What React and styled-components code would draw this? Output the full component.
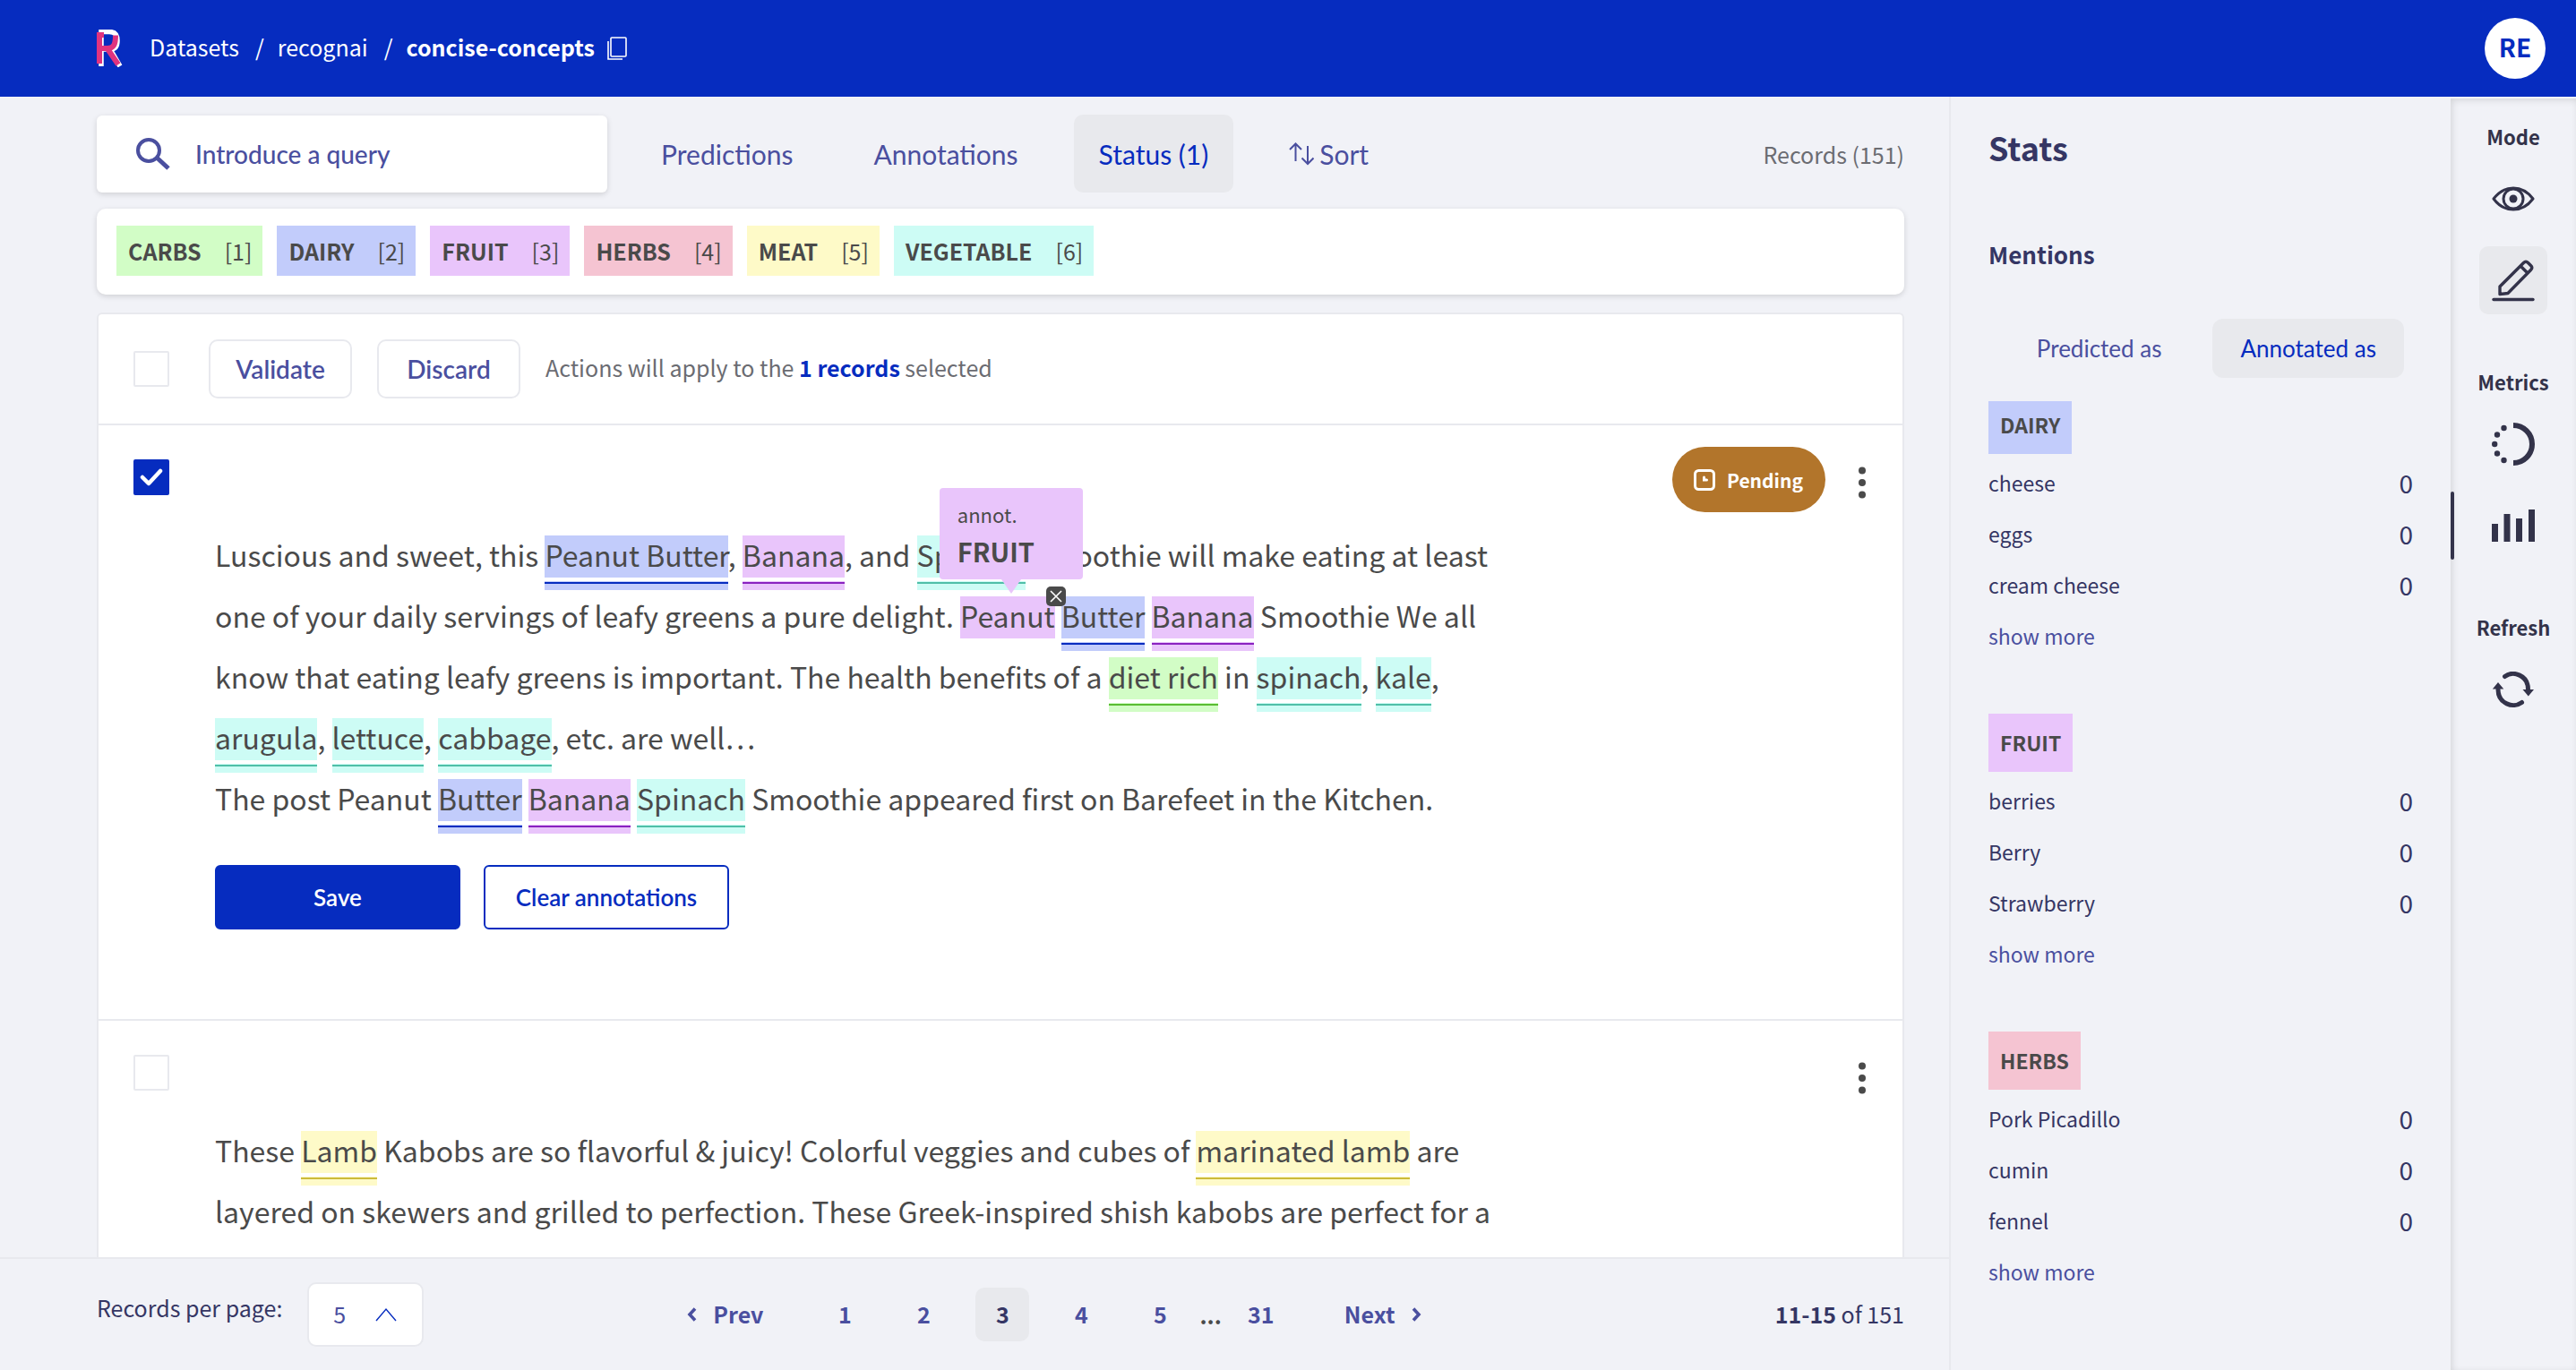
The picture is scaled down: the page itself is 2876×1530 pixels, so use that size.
import React, { useState } from "react";
import styled, { createGlobalStyle, css } from "styled-components";

const color = {
  brand: "#062cbf",
  page: "#f1f2f7",
  line: "#e8e9ee",
  soft: "#e8e9ed",
  link: "#4a4f9f",
  navy: "#353664",
  ink: "#4a4a4a",
  rail: "#33334a",
  muted: "#6b6c72",
};

const entityColors = {
  CARBS: { light: "#d2fdc6", dark: "#5abb32" },
  DAIRY: { light: "#c2ccfb", dark: "#062cbf" },
  FRUIT: { light: "#e9c5fb", dark: "#8a22c0" },
  HERBS: { light: "#f5c4d2", dark: "#c93a63" },
  MEAT: { light: "#fefac8", dark: "#cdbb3c" },
  VEGETABLE: { light: "#cdfcf5", dark: "#50bfa8" },
};

const sans = `"Noto Sans CJK SC", "Noto Sans", sans-serif`;
const display = `Lato, "Open Sans", sans-serif`;

const GlobalStyle = createGlobalStyle`
  *, *::before, *::after { box-sizing: border-box; }
  body { margin: 0; background: ${color.page}; color: ${color.ink}; font-family: ${sans}; font-size: 25px; line-height: 36px; }
  button, input, select { font: inherit; color: inherit; margin: 0; }
  button { background: none; border: 0; padding: 0; cursor: pointer; }
  ul, ol { list-style: none; margin: 0; padding: 0; }
  h1, h2, p { margin: 0; }
  svg { display: block; flex: none; }
`;

const Page = styled.div`
  height: 100vh;
  display: grid;
  grid-template-rows: 108px minmax(0, 1fr);
`;

const TopBar = styled.header`
  display: flex;
  align-items: center;
  justify-content: space-between;
  padding: 0 34px 0 108px;
  background: ${color.brand};
  color: #fff;
`;

const Breadcrumbs = styled.nav`
  display: flex;
  align-items: center;
`;

const HomeLink = styled.a`
  margin-right: 29px;
`;

const Crumb = styled.a`
  padding-bottom: 4px;
  color: inherit;
  text-decoration: none;
  font-weight: ${(p) => (p.$current ? 700 : 400)};
`;

const Slash = styled.span`
  padding: 0 15px 4px 18px;
`;

const CopyButton = styled.button`
  margin-left: 14px;
`;

const Avatar = styled.button`
  width: 68px;
  height: 68px;
  padding-bottom: 4px;
  border-radius: 50%;
  background: #fff;
  color: ${color.brand};
  font-size: 28px;
  font-weight: 700;
`;

const Body = styled.div`
  display: grid;
  grid-template-columns: minmax(0, 1fr) 560px 140px;
  min-height: 0;
`;

const Workspace = styled.main`
  display: flex;
  flex-direction: column;
  min-width: 0;
  min-height: 0;
`;

const Content = styled.div`
  flex: 1;
  min-height: 0;
  display: flex;
  flex-direction: column;
  padding: 20px 50px 0 108px;
`;

const FilterBar = styled.div`
  display: flex;
  align-items: center;
  height: 87px;
  margin-bottom: 18px;
`;

const SearchBox = styled.label`
  width: 570px;
  height: 86px;
  display: flex;
  align-items: center;
  gap: 28px;
  padding: 0 44px;
  border-radius: 6px;
  background: #fff;
  color: ${color.link};
  box-shadow: 0 2px 6px rgba(0, 0, 0, 0.14);
`;

const SearchInput = styled.input`
  flex: 1;
  min-width: 0;
  border: 0;
  padding: 0;
  outline: 0;
  background: none;
  font-family: ${display};
  font-size: 28px;
  font-weight: 500;

  &::placeholder {
    color: ${color.link};
    opacity: 1;
  }
`;

const Filters = styled.div`
  display: flex;
  height: 100%;
  gap: 34px;
  margin-left: 32px;
`;

const Filter = styled.button`
  display: flex;
  align-items: center;
  gap: 6px;
  padding: 0 28px;
  border-radius: 10px;
  font-family: ${display};
  font-size: 30px;
  color: ${color.link};
  ${(p) =>
    p.$active &&
    css`
      background: ${color.soft};
      color: ${color.brand};
    `}
`;

const RecordTotal = styled.span`
  margin-left: auto;
  color: ${color.muted};
`;

const Labels = styled.div`
  display: flex;
  gap: 16px;
  padding: 19px 22px 21px;
  margin-bottom: 20px;
  border-radius: 10px;
  background: #fff;
  box-shadow: 0 2px 6px rgba(0, 0, 0, 0.14);
`;

const LabelButton = styled.button`
  display: flex;
  align-items: center;
  gap: 26px;
  height: 56px;
  padding: 0 12px 0 13px;
  background: ${(p) => entityColors[p.$entity].light};
  font-weight: 600;
`;

const Shortcut = styled.span`
  font-weight: 400;
`;

const RecordList = styled.section`
  flex: 1;
  min-height: 0;
  overflow: hidden;
  border: 2px solid ${color.line};
  border-bottom: 0;
  border-radius: 6px 6px 0 0;
  background: #fff;
`;

const BulkBar = styled.div`
  display: flex;
  align-items: center;
  height: 124px;
  padding-left: 39px;
  border-bottom: 2px solid ${color.line};
`;

const CheckCell = styled.span`
  display: grid;
  place-items: center;
  width: 40px;
  height: 40px;
  color: #fff;

  > * {
    grid-area: 1 / 1;
  }

  svg {
    pointer-events: none;
  }
`;

const CheckInput = styled.input`
  appearance: none;
  width: 40px;
  height: 40px;
  border: 2px solid ${color.line};
  border-radius: 2px;
  background: #fff;

  &:checked {
    border-color: ${color.brand};
    background: ${color.brand};
  }
`;

const BulkActions = styled.div`
  display: flex;
  gap: 28px;
  margin: 0 28px 0 44px;
`;

const OutlineButton = styled.button`
  width: 160px;
  height: 66px;
  border: 2px solid ${color.line};
  border-radius: 10px;
  font-family: ${display};
  font-size: 28px;
  font-weight: 600;
  color: ${color.link};
`;

const BulkNote = styled.p`
  padding-bottom: 4px;
  color: ${color.muted};

  strong {
    color: ${color.brand};
  }
`;

const Record = styled.article`
  display: grid;
  grid-template-columns: 40px minmax(0, 1fr);
  column-gap: 51px;
  padding: 24px 41px 100px 39px;
  border-bottom: 2px solid ${color.line};
`;

const RecordTop = styled.div`
  grid-column: 1 / -1;
  display: flex;
  justify-content: space-between;
  align-items: flex-start;
  height: 86px;
  padding-top: 14px;
`;

const RecordStatus = styled.div`
  display: flex;
  align-items: center;
  gap: 37px;
  height: 73px;
  margin-top: -14px;
`;

const Badge = styled.span`
  display: flex;
  align-items: center;
  gap: 13px;
  height: 73px;
  padding: 0 25px 0 24px;
  border-radius: 37px;
  background: #b2752b;
  color: #fff;
  font-size: 21px;
  font-weight: 600;
`;

const MenuButton = styled.button`
  height: 48px;
  padding-top: 6px;
  color: ${color.ink};
`;

const RecordBody = styled.div`
  grid-column: 2;
`;

const RecordText = styled.p`
  max-width: 1460px;
  font-size: 32px;
  line-height: 68px;
`;

const Entity = styled.mark`
  position: relative;
  padding-bottom: 17px;
  color: inherit;
  background: ${(p) => {
    const { light, dark } = entityColors[p.$entity];
    return p.$hovered
      ? `linear-gradient(transparent 2px, ${light} 2px 49px, transparent 49px)`
      : `linear-gradient(transparent 2px, ${light} 2px 49px, transparent 49px 53px, ${light} 53px 54px, ${dark} 54px 56px, ${light} 56px)`;
  }};
`;

const EntityTip = styled.span`
  position: absolute;
  z-index: 1;
  left: 50%;
  bottom: 80px;
  width: 160px;
  height: 102px;
  margin-left: -76px;
  padding: 12px 20px;
  display: flex;
  flex-direction: column;
  border-radius: 4px;
  background: ${(p) => entityColors[p.$entity].light};
  font-size: 22px;
  line-height: 34px;

  &::after {
    content: "";
    position: absolute;
    left: 69px;
    top: 100%;
    border: solid transparent;
    border-width: 16px 11px 0;
    border-top-color: ${(p) => entityColors[p.$entity].light};
  }

  strong {
    font-size: 29px;
    line-height: 48px;
    font-weight: 600;
  }
`;

const RemoveButton = styled.button`
  position: absolute;
  z-index: 2;
  right: -12px;
  top: -9px;
  width: 22px;
  height: 22px;
  display: grid;
  place-items: center;
  border-radius: 5px;
  background: ${color.ink};
  color: #fff;
`;

const RecordActions = styled.div`
  display: flex;
  gap: 26px;
  margin-top: 41px;
`;

const ActionButton = styled.button`
  width: 274px;
  height: 72px;
  border: 2px solid ${color.brand};
  border-radius: 6px;
  font-family: ${display};
  font-size: 26px;
  font-weight: 600;
  color: ${(p) => (p.$primary ? "#fff" : color.brand)};
  background: ${(p) => (p.$primary ? color.brand : "#fff")};
`;

const Footer = styled.footer`
  display: grid;
  grid-template-columns: 11fr auto 9fr;
  align-items: center;
  height: 126px;
  padding: 0 50px 0 108px;
  border-top: 2px solid ${color.line};
`;

const PageSize = styled.label`
  display: flex;
  align-items: center;
  gap: 28px;
  color: ${color.navy};
`;

const PageSizeText = styled.span`
  padding-bottom: 16px;
`;

const SelectBox = styled.span`
  display: grid;
  align-items: center;
  color: ${color.brand};

  > * {
    grid-area: 1 / 1;
  }

  svg {
    justify-self: end;
    margin-right: 30px;
    pointer-events: none;
  }
`;

const SizeSelect = styled.select`
  appearance: none;
  width: 130px;
  height: 72px;
  padding: 0 27px 2px;
  border: 2px solid ${color.line};
  border-radius: 10px;
  background: #fff;
  color: ${color.link};
`;

const Pager = styled.nav`
  display: flex;
  align-items: center;
  font-weight: 600;
  color: ${color.link};
`;

const Pages = styled.ol`
  display: flex;
  align-items: center;
  gap: 28px;
  margin-left: 61px;
`;

const PageButton = styled.button`
  min-width: 60px;
  height: 60px;
  padding-bottom: 2px;
  border-radius: 10px;
  font-weight: 600;
  ${(p) =>
    p.$current &&
    css`
      background: ${color.soft};
      color: ${color.navy};
    `}
`;

const LastPages = styled.span`
  display: flex;
  align-items: center;
  gap: 14px;
  margin-left: 14px;
  color: ${color.ink};

  button {
    color: ${color.link};
  }
`;

const StepButton = styled.button`
  display: flex;
  align-items: center;
  gap: 18px;
  margin-left: ${(p) => (p.$next ? "63px" : "0")};
  font-weight: 600;
`;

const StepText = styled.span`
  padding-bottom: 2px;
`;

const Range = styled.p`
  justify-self: end;
  padding-bottom: 2px;
  color: ${color.navy};
`;

const Stats = styled.aside`
  border-left: 2px solid ${color.line};
  padding: 32px 42px 0;
  color: ${color.navy};
  overflow: hidden;
`;

const StatsTitle = styled.h1`
  font-size: 36px;
  line-height: 48px;
  margin-bottom: 78px;
`;

const StatsSubtitle = styled.h2`
  font-size: 26px;
  line-height: 36px;
  font-weight: 600;
  margin-bottom: 54px;
`;

const Tabs = styled.div`
  display: flex;
  justify-content: flex-end;
  gap: 26px;
  margin: 0 10px 26px 0;
`;

const Tab = styled.button`
  height: 66px;
  padding: 0 31px;
  border-radius: 12px;
  font-family: ${display};
  font-size: 26px;
  white-space: nowrap;
  color: ${(p) => (p.$active ? color.brand : color.link)};
  background: ${(p) => (p.$active ? color.soft : "none")};
`;

const Group = styled.section`
  margin-bottom: 57px;
`;

const GroupTag = styled.h2`
  width: fit-content;
  margin-bottom: 5px;
  padding: ${(p) => (p.$first ? "8px" : "14px")} 13px 15px;
  background: ${(p) => entityColors[p.$entity].light};
  color: ${color.ink};
  font-size: 23px;
  line-height: 36px;
  font-weight: 600;
`;

const Mention = styled.li`
  display: flex;
  align-items: center;
  justify-content: space-between;
  height: 57px;
  padding-bottom: 4px;
  font-size: 23px;
`;

const MentionCount = styled.span`
  font-size: 28px;
`;

const ShowMore = styled.button`
  display: block;
  height: 57px;
  padding-bottom: 4px;
  font-size: 23px;
  color: ${color.link};
`;

const Rail = styled.aside`
  display: flex;
  flex-direction: column;
  gap: 62px;
  margin-top: 2px;
  padding-top: 29px;
  color: ${color.rail};
  box-shadow: inset 2px 2px 8px -1px rgba(0, 0, 0, 0.14);
`;

const RailGroup = styled.div`
  display: flex;
  flex-direction: column;
  align-items: center;
  gap: 15px;
`;

const RailTitle = styled.p`
  padding-bottom: 4px;
  font-size: 22px;
  line-height: 26px;
  font-weight: 600;
`;

const RailButton = styled.button`
  position: relative;
  width: 76px;
  height: 76px;
  display: grid;
  place-items: center;
  border-radius: 10px;
  background: ${(p) => (p.$active ? color.soft : "none")};

  ${(p) =>
    p.$open &&
    css`
      &::before {
        content: "";
        position: absolute;
        left: -32px;
        top: 0;
        width: 4px;
        height: 76px;
        border-radius: 2px;
        background: ${color.rail};
      }
    `}
`;

const Logo = () => (
  <svg width="30" height="42" viewBox="0 0 30 42" fill="none" aria-label="Home">
    <path d="M5 41V2.500H14c7 0 9 4 9 10S21 22 15 22H6M15 22l11 19" stroke="#fff" strokeWidth="5.500" />
    <path d="M3 38V6h5" stroke="#e0337f" strokeWidth="6" />
    <path d="M21 6.500c0 10-2 14.500-9 14.500H5M11 20l13 19" stroke="#e0337f" strokeWidth="6" />
  </svg>
);

const CopyIcon = () => (
  <svg width="22" height="26" viewBox="0 0 22 26" fill="none" stroke="#fff" strokeWidth="1.600">
    <rect x="4" y="1" width="17" height="21" rx="1" />
    <path d="M1 5v20h16" />
  </svg>
);

const SearchIcon = () => (
  <svg width="38" height="36" viewBox="0 0 38 36" fill="none" stroke="currentColor" strokeWidth="4">
    <circle cx="14" cy="14" r="12" />
    <path d="M23 22l13 12" strokeWidth="5" />
  </svg>
);

const SortIcon = () => (
  <svg width="28" height="26" viewBox="0 0 28 26" fill="none" stroke="currentColor" strokeWidth="2">
    <path d="M7.500 21V2M1 8l6.500-6.500L14 8M21 4v20M14.500 17.500L21 24l6.500-6.500" />
  </svg>
);

const CheckIcon = () => (
  <svg width="26" height="20" viewBox="0 0 26 20" fill="none" stroke="currentColor" strokeWidth="4.500" strokeLinecap="round" strokeLinejoin="round">
    <path d="M3 10l7 7L23 3" />
  </svg>
);

const PendingIcon = () => (
  <svg width="24" height="24" viewBox="0 0 24 24" fill="none" stroke="currentColor" strokeWidth="3">
    <rect x="1.500" y="1.500" width="21" height="21" rx="4" />
    <path d="M11.500 9v3h3" strokeLinecap="round" />
  </svg>
);

const DotsIcon = () => (
  <svg width="8" height="36" viewBox="0 0 8 36" fill="currentColor">
    <circle cx="4" cy="4.500" r="4" />
    <circle cx="4" cy="18" r="4" />
    <circle cx="4" cy="31.500" r="4" />
  </svg>
);

const CrossIcon = () => (
  <svg width="14" height="14" viewBox="0 0 14 14" stroke="currentColor" strokeWidth="1.600">
    <path d="M1 1l12 12M13 1L1 13" />
  </svg>
);

const ChevronUp = () => (
  <svg width="24" height="16" viewBox="0 0 24 16" fill="none" stroke="currentColor" strokeWidth="1.400">
    <path d="M1 15L12 2l11 13" />
  </svg>
);

const StepIcon = ({ next }) => (
  <svg width="11" height="16" viewBox="0 0 11 16" fill="none" stroke="currentColor" strokeWidth="3.600">
    <path d={next ? "M2 1.500l6 6.500-6 6.500" : "M9 1.500L3 8l6 6.500"} />
  </svg>
);

const EyeIcon = () => (
  <svg width="48" height="28" viewBox="0 0 48 28" fill="none" stroke="currentColor" strokeWidth="3">
    <path d="M2 14C8 6 15.500 2 24 2s16 4 22 12c-6 8-13.500 12-22 12S8 22 2 14z" strokeLinejoin="round" />
    <circle cx="24" cy="14" r="11" />
    <circle cx="24" cy="14" r="4.500" fill="currentColor" stroke="none" />
  </svg>
);

const PencilIcon = () => (
  <svg width="48" height="48" viewBox="0 0 48 48" fill="none" stroke="currentColor" strokeWidth="3.400" strokeLinejoin="round">
    <path d="M9 39.500V31L35.500 4.500q2.500-2.500 5 0l3 3q2.500 2.500 0 5L18 38.500zM32 8l8.500 8.500" />
    <path d="M2 45.500h44" strokeLinecap="round" />
  </svg>
);

const ProgressIcon = () => (
  <svg width="48" height="48" viewBox="0 0 48 48">
    <path d="M24 3a21 21 0 0 1 0 42" fill="none" stroke="currentColor" strokeWidth="6" />
    <g fill="currentColor">
      <circle cx="13.500" cy="6" r="3.200" />
      <circle cx="6" cy="13.500" r="3.200" />
      <circle cx="3.200" cy="24" r="3.200" />
      <circle cx="6" cy="34.500" r="3.200" />
      <circle cx="13.500" cy="42" r="3.200" />
    </g>
  </svg>
);

const BarsIcon = () => (
  <svg width="48" height="36" viewBox="0 0 48 36" fill="currentColor">
    <path d="M0 16h7v20H0zM13.500 5h7v31h-7zM27 10h7v26h-7zM41 0h7v36h-7z" />
  </svg>
);

const RefreshIcon = () => (
  <svg width="48" height="40" viewBox="0 0 48 40" fill="none" stroke="currentColor" strokeWidth="5" strokeLinecap="round">
    <path d="M14.500 5.500C24-1.500 40.500 4 40.500 20M33.500 34.500C24 41.500 7 36 7 20" />
    <path d="M34.500 20h12.500l-6.200 7.500zM.8 19.500h12.500L7 12z" fill="currentColor" stroke="none" />
  </svg>
);

const labels = ["CARBS", "DAIRY", "FRUIT", "HERBS", "MEAT", "VEGETABLE"];

const firstRecord = [
  "Luscious and sweet, this ", ["Peanut Butter", "DAIRY"], ", ", ["Banana", "FRUIT"], ", and ", ["Spinach", "VEGETABLE"],
  " Smoothie will make eating at least one of your daily servings of leafy greens a pure delight. ",
  ["Peanut", "FRUIT", true], " ", ["Butter", "DAIRY"], " ", ["Banana", "FRUIT"],
  " Smoothie We all know that eating leafy greens is important. The health benefits of a ", ["diet rich", "CARBS"],
  " in ", ["spinach", "VEGETABLE"], ", ", ["kale", "VEGETABLE"], ", ", ["arugula", "VEGETABLE"], ", ",
  ["lettuce", "VEGETABLE"], ", ", ["cabbage", "VEGETABLE"], ", etc. are well…", null,
  "The post Peanut ", ["Butter", "DAIRY"], " ", ["Banana", "FRUIT"], " ", ["Spinach", "VEGETABLE"],
  " Smoothie appeared first on Barefeet in the Kitchen.",
];

const secondRecord = [
  "These ", ["Lamb", "MEAT"], " Kabobs are so flavorful & juicy! Colorful veggies and cubes of ",
  ["marinated lamb", "MEAT"],
  " are layered on skewers and grilled to perfection. These Greek-inspired shish kabobs are perfect for a",
];

const mentions = [
  { entity: "DAIRY", items: ["cheese", "eggs", "cream cheese"] },
  { entity: "FRUIT", items: ["berries", "Berry", "Strawberry"] },
  { entity: "HERBS", items: ["Pork Picadillo", "cumin", "fennel"] },
];

function Check({ label, initial = false }) {
  const [checked, setChecked] = useState(initial);
  return (
    <CheckCell>
      <CheckInput type="checkbox" aria-label={label} checked={checked} onChange={() => setChecked(!checked)} />
      {checked && <CheckIcon />}
    </CheckCell>
  );
}

function AnnotatedText({ parts }) {
  return (
    <RecordText>
      {parts.map((part, i) => {
        if (part === null) return <br key={i} />;
        if (typeof part === "string") return <React.Fragment key={i}>{part}</React.Fragment>;
        const [text, entity, hovered] = part;
        return (
          <Entity key={i} $entity={entity} $hovered={hovered}>
            {text}
            {hovered && (
              <>
                <EntityTip $entity={entity} role="tooltip">
                  annot.<strong>{entity}</strong>
                </EntityTip>
                <RemoveButton aria-label="Remove annotation"><CrossIcon /></RemoveButton>
              </>
            )}
          </Entity>
        );
      })}
    </RecordText>
  );
}

export default function App() {
  return (
    <Page>
      <GlobalStyle />
      <TopBar>
        <Breadcrumbs>
          <HomeLink href="#"><Logo /></HomeLink>
          <Crumb href="#">Datasets</Crumb>
          <Slash>/</Slash>
          <Crumb href="#">recognai</Crumb>
          <Slash>/</Slash>
          <Crumb href="#" $current>concise-concepts</Crumb>
          <CopyButton aria-label="Copy name"><CopyIcon /></CopyButton>
        </Breadcrumbs>
        <Avatar>RE</Avatar>
      </TopBar>

      <Body>
        <Workspace>
          <Content>
            <FilterBar>
              <SearchBox>
                <SearchIcon />
                <SearchInput type="text" aria-label="Search" placeholder="Introduce a query" />
              </SearchBox>
              <Filters>
                <Filter>Predictions</Filter>
                <Filter>Annotations</Filter>
                <Filter $active>Status (1)</Filter>
                <Filter><SortIcon />Sort</Filter>
              </Filters>
              <RecordTotal>Records (151)</RecordTotal>
            </FilterBar>

            <Labels>
              {labels.map((label, i) => (
                <LabelButton key={label} $entity={label}>
                  {label}
                  <Shortcut>[{i + 1}]</Shortcut>
                </LabelButton>
              ))}
            </Labels>

            <RecordList>
              <BulkBar>
                <Check label="Select all records" />
                <BulkActions>
                  <OutlineButton>Validate</OutlineButton>
                  <OutlineButton>Discard</OutlineButton>
                </BulkActions>
                <BulkNote>Actions will apply to the <strong>1 records</strong> selected</BulkNote>
              </BulkBar>

              <Record>
                <RecordTop>
                  <Check label="Select record" initial />
                  <RecordStatus>
                    <Badge><PendingIcon />Pending</Badge>
                    <MenuButton aria-label="Record menu"><DotsIcon /></MenuButton>
                  </RecordStatus>
                </RecordTop>
                <RecordBody>
                  <AnnotatedText parts={firstRecord} />
                  <RecordActions>
                    <ActionButton $primary>Save</ActionButton>
                    <ActionButton>Clear annotations</ActionButton>
                  </RecordActions>
                </RecordBody>
              </Record>

              <Record>
                <RecordTop>
                  <Check label="Select record" />
                  <RecordStatus>
                    <MenuButton aria-label="Record menu"><DotsIcon /></MenuButton>
                  </RecordStatus>
                </RecordTop>
                <RecordBody>
                  <AnnotatedText parts={secondRecord} />
                </RecordBody>
              </Record>
            </RecordList>
          </Content>

          <Footer>
            <PageSize>
              <PageSizeText>Records per page:</PageSizeText>
              <SelectBox>
                <SizeSelect defaultValue="5">
                  <option>5</option>
                  <option>10</option>
                  <option>20</option>
                </SizeSelect>
                <ChevronUp />
              </SelectBox>
            </PageSize>
            <Pager aria-label="Pages">
              <StepButton><StepIcon /><StepText>Prev</StepText></StepButton>
              <Pages>
                {[1, 2, 3, 4, 5].map((n) => (
                  <li key={n}><PageButton $current={n === 3}>{n}</PageButton></li>
                ))}
              </Pages>
              <LastPages>...<PageButton>31</PageButton></LastPages>
              <StepButton $next><StepText>Next</StepText><StepIcon next /></StepButton>
            </Pager>
            <Range><strong>11-15</strong> of 151</Range>
          </Footer>
        </Workspace>

        <Stats>
          <StatsTitle>Stats</StatsTitle>
          <StatsSubtitle>Mentions</StatsSubtitle>
          <Tabs>
            <Tab>Predicted as</Tab>
            <Tab $active>Annotated as</Tab>
          </Tabs>
          {mentions.map(({ entity, items }, i) => (
            <Group key={entity}>
              <GroupTag $entity={entity} $first={i === 0}>{entity}</GroupTag>
              <ul>
                {items.map((item) => (
                  <Mention key={item}>
                    {item}
                    <MentionCount>0</MentionCount>
                  </Mention>
                ))}
              </ul>
              <ShowMore>show more</ShowMore>
            </Group>
          ))}
        </Stats>

        <Rail>
          <RailGroup>
            <RailTitle>Mode</RailTitle>
            <RailButton aria-label="Explore"><EyeIcon /></RailButton>
            <RailButton aria-label="Annotate" $active><PencilIcon /></RailButton>
          </RailGroup>
          <RailGroup>
            <RailTitle>Metrics</RailTitle>
            <RailButton aria-label="Progress"><ProgressIcon /></RailButton>
            <RailButton aria-label="Stats" $open><BarsIcon /></RailButton>
          </RailGroup>
          <RailGroup>
            <RailTitle>Refresh</RailTitle>
            <RailButton aria-label="Refresh records"><RefreshIcon /></RailButton>
          </RailGroup>
        </Rail>
      </Body>
    </Page>
  );
}
